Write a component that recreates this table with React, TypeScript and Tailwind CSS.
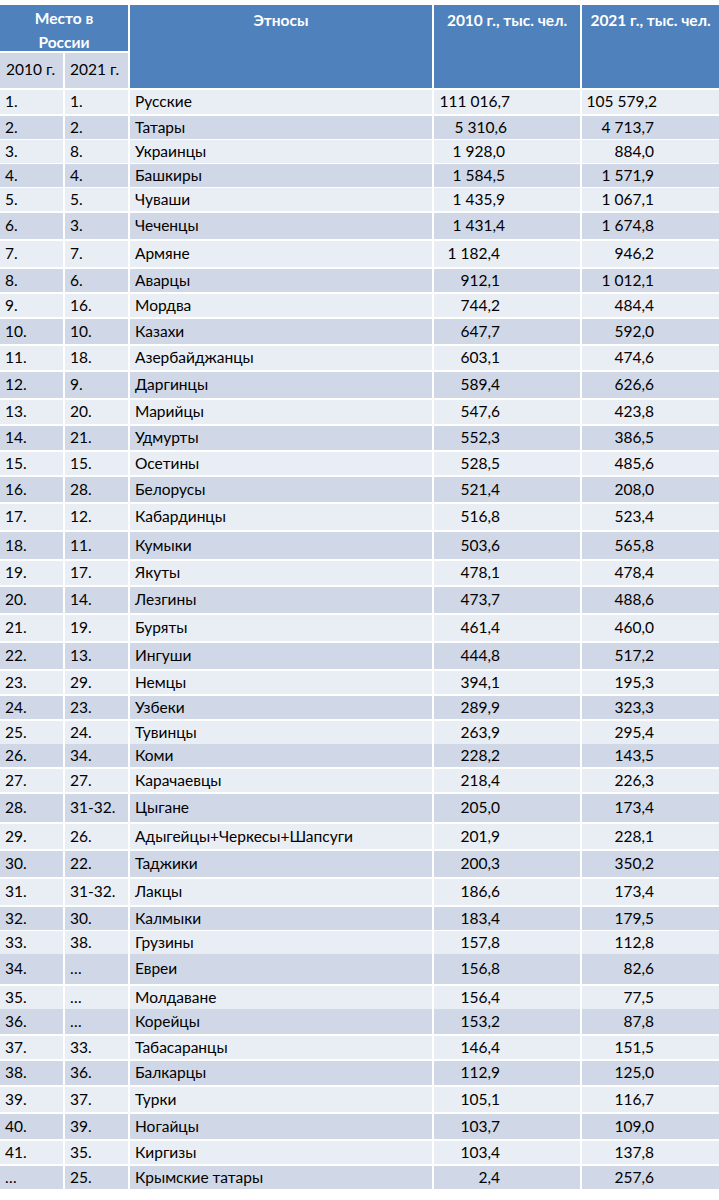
import React from "react";

type Row = {
  a: string;
  b: string;
  name: string;
  v1: string;
  v2: string;
  h: string;
  p1?: string;
  p2?: string;
};

const rows: Row[] = [
  { a: "1.", b: "1.", name: "Русские", v1: "111 016,7", v2: "105 579,2", h: "h-[24px]", p1: "pr-[70px]", p2: "pr-[62px]" },
  { a: "2.", b: "2.", name: "Татары", v1: "5 310,6", v2: "4 713,7", h: "h-[22px]", p1: "pr-[73px]" },
  { a: "3.", b: "8.", name: "Украинцы", v1: "1 928,0", v2: "884,0", h: "h-[22px]", p1: "pr-[75px]" },
  { a: "4.", b: "4.", name: "Башкиры", v1: "1 584,5", v2: "1 571,9", h: "h-[22px]", p1: "pr-[75px]" },
  { a: "5.", b: "5.", name: "Чуваши", v1: "1 435,9", v2: "1 067,1", h: "h-[23px]", p1: "pr-[75px]" },
  { a: "6.", b: "3.", name: "Чеченцы", v1: "1 431,4", v2: "1 674,8", h: "h-[26px]", p1: "pr-[75px]" },
  { a: "7.", b: "7.", name: "Армяне", v1: "1 182,4", v2: "946,2", h: "h-[26px]" },
  { a: "8.", b: "6.", name: "Аварцы", v1: "912,1", v2: "1 012,1", h: "h-[23px]" },
  { a: "9.", b: "16.", name: "Мордва", v1: "744,2", v2: "484,4", h: "h-[23px]" },
  { a: "10.", b: "10.", name: "Казахи", v1: "647,7", v2: "592,0", h: "h-[25px]" },
  { a: "11.", b: "18.", name: "Азербайджанцы", v1: "603,1", v2: "474,6", h: "h-[24px]" },
  { a: "12.", b: "9.", name: "Даргинцы", v1: "589,4", v2: "626,6", h: "h-[26px]" },
  { a: "13.", b: "20.", name: "Марийцы", v1: "547,6", v2: "423,8", h: "h-[24px]" },
  { a: "14.", b: "21.", name: "Удмурты", v1: "552,3", v2: "386,5", h: "h-[24px]" },
  { a: "15.", b: "15.", name: "Осетины", v1: "528,5", v2: "485,6", h: "h-[23px]" },
  { a: "16.", b: "28.", name: "Белорусы", v1: "521,4", v2: "208,0", h: "h-[25px]" },
  { a: "17.", b: "12.", name: "Кабардинцы", v1: "516,8", v2: "523,4", h: "h-[26px]" },
  { a: "18.", b: "11.", name: "Кумыки", v1: "503,6", v2: "565,8", h: "h-[27px]" },
  { a: "19.", b: "17.", name: "Якуты", v1: "478,1", v2: "478,4", h: "h-[24px]" },
  { a: "20.", b: "14.", name: "Лезгины", v1: "473,7", v2: "488,6", h: "h-[26px]" },
  { a: "21.", b: "19.", name: "Буряты", v1: "461,4", v2: "460,0", h: "h-[26px]" },
  { a: "22.", b: "13.", name: "Ингуши", v1: "444,8", v2: "517,2", h: "h-[26px]" },
  { a: "23.", b: "29.", name: "Немцы", v1: "394,1", v2: "195,3", h: "h-[23px]" },
  { a: "24.", b: "23.", name: "Узбеки", v1: "289,9", v2: "323,3", h: "h-[23px]" },
  { a: "25.", b: "24.", name: "Тувинцы", v1: "263,9", v2: "295,4", h: "h-[21px]" },
  { a: "26.", b: "34.", name: "Коми", v1: "228,2", v2: "143,5", h: "h-[23px]" },
  { a: "27.", b: "27.", name: "Карачаевцы", v1: "218,4", v2: "226,3", h: "h-[23px]" },
  { a: "28.", b: "31-32.", name: "Цыгане", v1: "205,0", v2: "173,4", h: "h-[28px]" },
  { a: "29.", b: "26.", name: "Адыгейцы+Черкесы+Шапсуги", v1: "201,9", v2: "228,1", h: "h-[25px]" },
  { a: "30.", b: "22.", name: "Таджики", v1: "200,3", v2: "350,2", h: "h-[26px]" },
  { a: "31.", b: "31-32.", name: "Лакцы", v1: "186,6", v2: "173,4", h: "h-[26px]" },
  { a: "32.", b: "30.", name: "Калмыки", v1: "183,4", v2: "179,5", h: "h-[22px]" },
  { a: "33.", b: "38.", name: "Грузины", v1: "157,8", v2: "112,8", h: "h-[21px]" },
  { a: "34.", b: "…", name: "Евреи", v1: "156,8", v2: "82,6", h: "h-[30px]" },
  { a: "35.", b: "…", name: "Молдаване", v1: "156,4", v2: "77,5", h: "h-[21px]" },
  { a: "36.", b: "…", name: "Корейцы", v1: "153,2", v2: "87,8", h: "h-[25px]" },
  { a: "37.", b: "33.", name: "Табасаранцы", v1: "146,4", v2: "151,5", h: "h-[23px]" },
  { a: "38.", b: "36.", name: "Балкарцы", v1: "112,9", v2: "125,0", h: "h-[24px]" },
  { a: "39.", b: "37.", name: "Турки", v1: "105,1", v2: "116,7", h: "h-[25px]" },
  { a: "40.", b: "39.", name: "Ногайцы", v1: "103,7", v2: "109,0", h: "h-[25px]" },
  { a: "41.", b: "35.", name: "Киргизы", v1: "103,4", v2: "137,8", h: "h-[23px]" },
  { a: "…", b: "25.", name: "Крымские татары", v1: "2,4", v2: "257,6", h: "h-[22px]" },
];

export default function App() {
  return (
    <div className="w-[719px] h-[1200px] bg-white pt-[5px] text-black text-[15.5px] font-['Lato',sans-serif]">
      {/* header */}
      <div className="grid grid-cols-[63px_63px_302px_146px_137px] grid-rows-[46px_35px] gap-[2px]">
        <div className="col-span-2 bg-[#4f81bd] text-white font-bold text-center leading-[24px] pt-[1px]">
          Место в<br />России
        </div>
        <div className="row-span-2 bg-[#4f81bd] text-white font-bold text-center leading-[24px] pt-[3px]">
          Этносы
        </div>
        <div className="row-span-2 bg-[#4f81bd] text-white font-bold text-center leading-[24px] pt-[3px] whitespace-nowrap">
          2010 г., тыс. чел.
        </div>
        <div className="row-span-2 bg-[#4f81bd] text-white font-bold text-center leading-[24px] pt-[3px] whitespace-nowrap">
          2021 г., тыс. чел.
        </div>
        <div className="bg-[#d0d8e8] pl-[6px] pt-[5px] leading-[22px] whitespace-nowrap">2010 г.</div>
        <div className="bg-[#d0d8e8] pl-[5px] pt-[5px] leading-[22px] whitespace-nowrap">2021 г.</div>
      </div>
      {/* body */}
      <div className="flex flex-col gap-[2px] mt-[2px]">
        {rows.map((r, i) => {
          const bg = i % 2 === 0 ? "bg-[#e9edf4]" : "bg-[#d0d8e8]";
          return (
            <div
              key={i}
              className={`grid grid-cols-[63px_63px_302px_146px_137px] gap-x-[2px] ${r.h}`}
            >
              <div className={`${bg} flex items-center pl-[5px] whitespace-nowrap`}>{r.a}</div>
              <div className={`${bg} flex items-center pl-[5px] whitespace-nowrap`}>{r.b}</div>
              <div className={`${bg} flex items-center pl-[5px] whitespace-nowrap`}>{r.name}</div>
              <div className={`${bg} flex items-center justify-end whitespace-nowrap ${r.p1 ?? "pr-[80px]"}`}>
                {r.v1}
              </div>
              <div className={`${bg} flex items-center justify-end whitespace-nowrap ${r.p2 ?? "pr-[65px]"}`}>
                {r.v2}
              </div>
            </div>
          );
        })}
      </div>
    </div>
  );
}
